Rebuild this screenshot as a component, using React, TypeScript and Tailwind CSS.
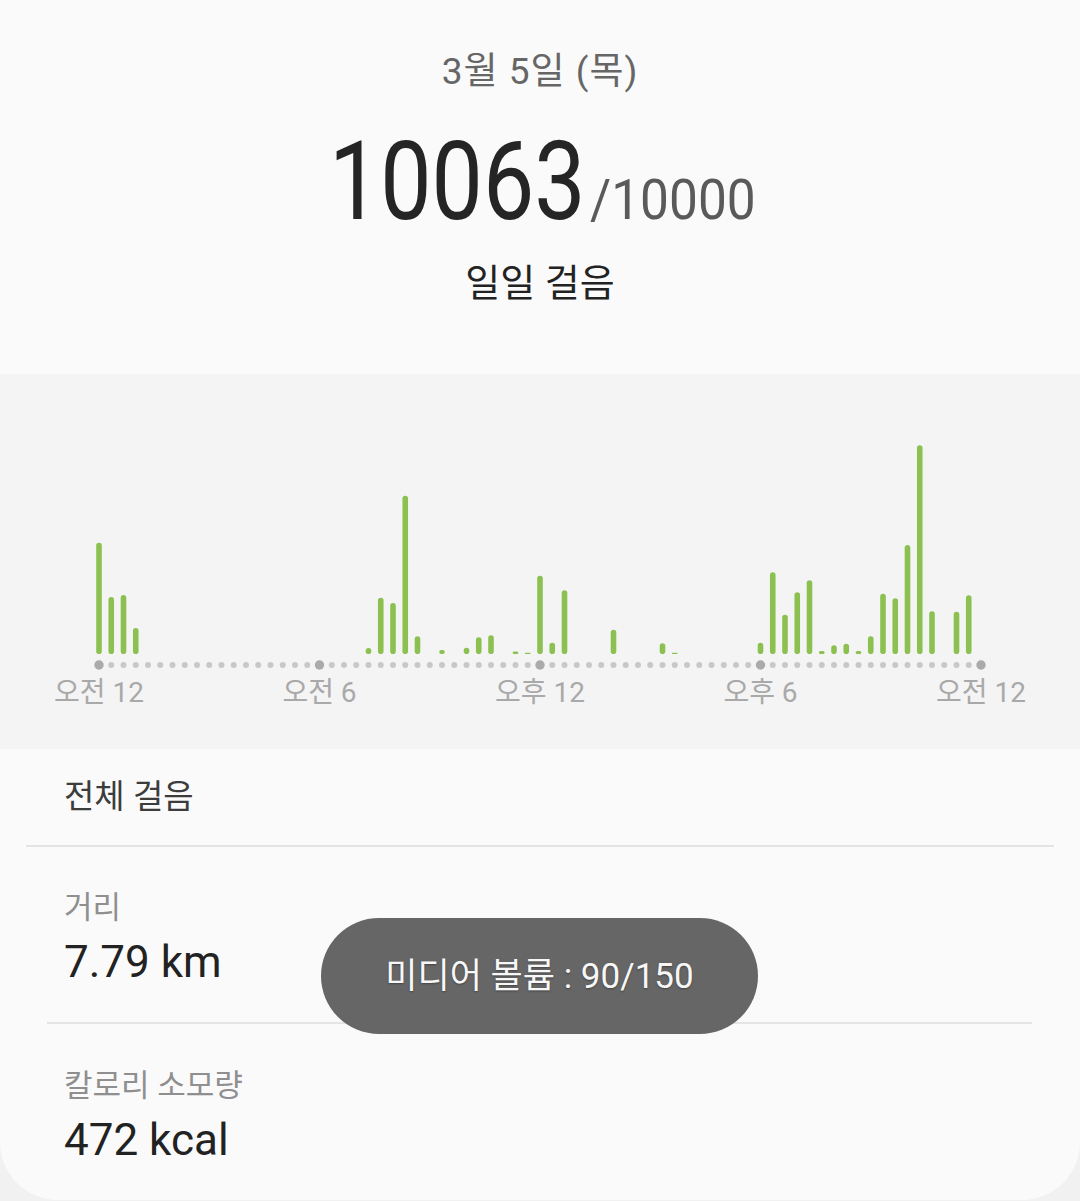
import React from "react";

const BARS: [number, number][] = [
  [0, 111.3], [1, 57], [2, 59], [3, 26],
  [22, 6], [23, 56.3], [24, 51], [25, 158.3], [26, 17.7], [28, 4],
  [30, 6.3], [31, 16.7], [32, 18.7], [34, 2.6], [35, 1.2], [36, 78.3], [37, 11.3], [38, 63.7],
  [42, 24.3], [46, 10.7], [47, 1.2],
  [54, 11.3], [55, 81.7], [56, 39.3], [57, 61.7], [58, 73.7], [59, 3], [60, 8.7], [61, 10.3],
  [62, 3], [63, 17.7], [64, 60.3], [65, 55.7], [66, 109], [67, 208.7], [68, 42.7], [70, 42.3], [71, 58.7],
];

const X0 = 99;
const STEP = 12.25;
const BASE = 280;
const BW = 5.6;

function Chart() {
  const dots = Array.from({ length: 73 }, (_, i) => i);
  return (
    <svg width="1080" height="302" viewBox="0 0 1080 302" className="block">
      {BARS.map(([slot, h]) => {
        const x = X0 + slot * STEP;
        const r = Math.min(BW / 2, h / 2);
        return (
          <rect
            key={slot}
            x={x - BW / 2}
            y={BASE - h}
            width={BW}
            height={h}
            rx={r}
            ry={r}
            fill="#8cc152"
          />
        );
      })}
      {dots.map((i) => {
        const big = i % 18 === 0;
        return (
          <circle
            key={i}
            cx={X0 + i * STEP}
            cy={291}
            r={big ? 4.7 : 3}
            fill={big ? "#aaaaaa" : "#c8c8c8"}
          />
        );
      })}
    </svg>
  );
}

export default function App() {
  return (
    <div className="relative w-[1080px] h-[1201px] overflow-hidden bg-[#f1f1f1] font-[Roboto,'Noto_Sans_CJK_KR',sans-serif]">
      {/* Header */}
      <section className="h-[374px] bg-[#fafafa] flex flex-col items-center pt-[51px]">
        <div className="text-[37px] leading-[42px] tracking-[1px] text-[#666666]">3월 5일 (목)</div>
        <div className="mt-[34px] h-[110px] flex items-baseline leading-none pl-[4px]">
          <span className="inline-block w-[258px] whitespace-nowrap text-[110px] text-[#252525] origin-left scale-x-[0.83]">
            10063
          </span>
          <span className="inline-block ml-[3px] w-[165px] whitespace-nowrap text-[55px] text-[#5a5a5a] origin-left scale-x-[0.935]">
            /10000
          </span>
        </div>
        <div className="mt-[24px] text-[38px] leading-[44px] text-[#222222]">일일 걸음</div>
      </section>

      {/* Chart */}
      <section className="h-[375px] bg-[#f4f4f4]">
        <Chart />
        <div className="ml-[-11.25px] w-[1102.5px] grid grid-cols-5 text-center text-[28px] leading-[34px] text-[#a9a9a9]">
          <span>오전 12</span>
          <span>오전 6</span>
          <span>오후 12</span>
          <span>오후 6</span>
          <span>오전 12</span>
        </div>
      </section>

      {/* Card */}
      <section className="h-[451px] bg-[#fafafa] rounded-b-[58px] flex flex-col">
        <div className="px-[64px] pt-[27px] text-[33px] leading-[41px] text-[#3c3c3c]">전체 걸음</div>
        <div className="mt-[28px] mx-[26px] h-[2px] bg-[#e4e4e4]" />
        <div className="px-[64px] pt-[42px] flex flex-col">
          <span className="text-[31px] leading-[37px] text-[#8f8f8f]">거리</span>
          <span className="mt-[12px] text-[44px] leading-[48px] text-[#222222]">7.79 km</span>
        </div>
        <div className="mt-[36px] ml-[47px] w-[985px] h-[2px] bg-[#e4e4e4]" />
        <div className="px-[64px] pt-[43px] flex flex-col">
          <span className="text-[31px] leading-[37px] text-[#8f8f8f]">칼로리 소모량</span>
          <span className="mt-[12px] text-[44px] leading-[48px] text-[#222222]">472 kcal</span>
        </div>
      </section>

      {/* Toast */}
      <div className="absolute left-[321px] top-[918px] w-[437px] h-[116px] rounded-full bg-[#666666] flex items-center justify-center">
        <span className="text-[35px] leading-none text-[#f7f7f7] [text-shadow:0_1px_2px_rgba(0,0,0,0.35)]">
          미디어 볼륨 : 90/150
        </span>
      </div>
    </div>
  );
}
